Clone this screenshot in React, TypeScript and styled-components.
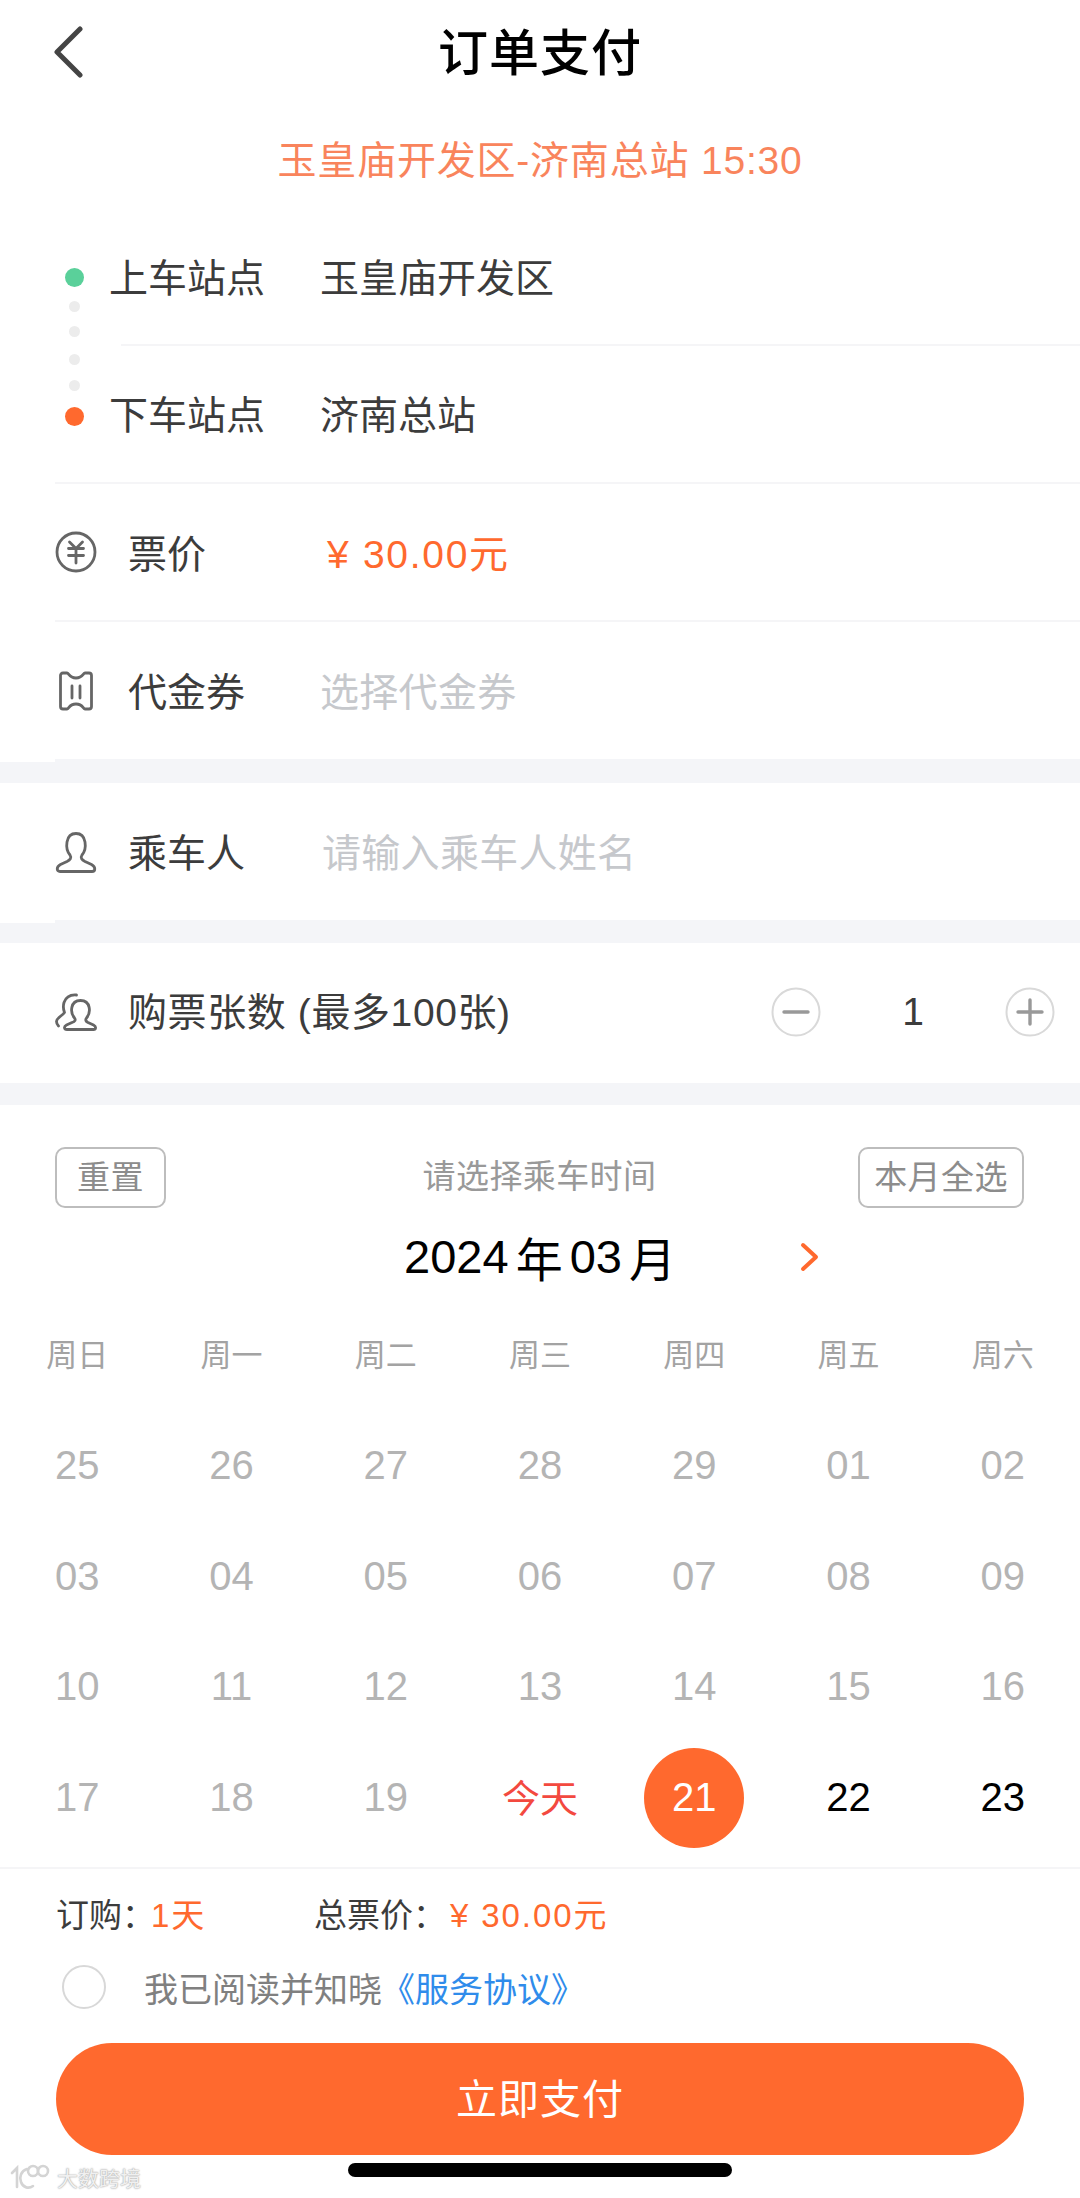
import React, { FC } from 'react'
import styled, { createGlobalStyle } from 'styled-components'

const GlobalStyle = createGlobalStyle`
    html, body {
        margin: 0;
        padding: 0;
        background: #fff;
    }
    * {
        box-sizing: border-box;
    }
    body {
        font-family: "Liberation Sans", "Noto Sans CJK SC", sans-serif;
    }
`

const ORANGE = '#ff692e'
const LINE = '#f5f5f7'
const BAND = '#f4f5f8'

const Page = styled.div`
    position: relative;
    width: 1080px;
    height: 2198px;
    overflow: hidden;
    background: #fff;
`
const Header = styled.header`
    position: relative;
    height: 104px;
    padding-bottom: 6px;
    display: flex;
    align-items: center;
    justify-content: center;
`
const BackButton = styled.svg`
    position: absolute;
    left: 52px;
    top: 26px;
    width: 32px;
    height: 52px;
`
const Title = styled.h1`
    margin: 0;
    font-size: 50px;
    font-weight: 500;
    letter-spacing: 1px;
    color: #000;
`
const Route = styled.div`
    height: 108px;
    padding-bottom: 2px;
    display: flex;
    align-items: center;
    justify-content: center;
    font-size: 39px;
    letter-spacing: 0.8px;
    color: #f9845c;
`
const Stations = styled.section`
    display: flex;
    margin-left: 55px;
    height: 272px;
    border-bottom: 2px solid ${LINE};
`
const Rail = styled.div`
    width: 38px;
    flex: none;
    margin-right: 16px;
    display: flex;
    flex-direction: column;
    align-items: center;
`
const RailDot = styled.i<{ $size: number; $top: number; $color: string }>`
    display: block;
    width: ${(p) => p.$size}px;
    height: ${(p) => p.$size}px;
    margin-top: ${(p) => p.$top}px;
    border-radius: 50%;
    background: ${(p) => p.$color};
`
const StationRows = styled.div`
    flex: 1;
`
const StationRow = styled.div<{ $height: number; $lift: number }>`
    position: relative;
    height: ${(p) => p.$height}px;
    padding-bottom: ${(p) => p.$lift}px;
    display: flex;
    align-items: center;
    font-size: 39px;
    color: #3c3c3c;
`
const StationDivider = styled.div`
    height: 2px;
    margin-left: 12px;
    background: ${LINE};
`
const StationLabel = styled.span`
    width: 211px;
`
const Row = styled.div<{ $height: number; $line?: string; $size?: number }>`
    display: flex;
    align-items: center;
    height: ${(p) => p.$height}px;
    margin-left: 55px;
    border-bottom: ${(p) => p.$size ?? 2}px solid ${(p) => p.$line ?? LINE};
    font-size: 39px;
    color: #3c3c3c;
`
const RowIcon = styled.svg`
    width: 42px;
    height: 42px;
    flex: none;
    fill: none;
    stroke: #666;
    stroke-width: 2.8;
    stroke-linejoin: round;
    stroke-linecap: round;
`
const RowLabel = styled.span<{ $width?: number; $spacing?: number; $lift?: number }>`
    margin-left: 31px;
    padding-bottom: ${(p) => p.$lift ?? 2}px;
    width: ${(p) => p.$width ?? 192}px;
    flex: none;
    white-space: nowrap;
    letter-spacing: ${(p) => p.$spacing ?? 0}px;
`
const Price = styled.span`
    padding-left: 7px;
    padding-bottom: 2px;
    letter-spacing: 1.7px;
    color: ${ORANGE};
`
const Placeholder = styled.span<{ $shift?: number }>`
    margin-left: ${(p) => p.$shift ?? 0}px;
    padding-bottom: 4px;
    letter-spacing: 0.3px;
    color: #c6c8cc;
`
const Band = styled.div<{ $height: number }>`
    height: ${(p) => p.$height}px;
    background: ${BAND};
`
const Stepper = styled.div`
    margin-left: auto;
    width: 284px;
    margin-right: 25px;
    display: flex;
    align-items: center;
    justify-content: space-between;
`
const StepButton = styled.svg`
    width: 50px;
    height: 50px;
    fill: none;
    stroke: #999;
    stroke-width: 3.4;
    stroke-linecap: round;
`
const Calendar = styled.section`
    padding-top: 42px;
`
const CalendarTop = styled.div`
    display: grid;
    grid-template-columns: 1fr auto 1fr;
    align-items: center;
    height: 61px;
    padding: 0 56px 0 55px;
`
const OutlineButton = styled.div<{ $width: number; $end?: boolean }>`
    width: ${(p) => p.$width}px;
    height: 61px;
    justify-self: ${(p) => (p.$end ? 'end' : 'start')};
    padding-bottom: 6px;
    display: flex;
    align-items: center;
    justify-content: center;
    border: 2px solid #bdbdbd;
    border-radius: 10px;
    font-size: 33px;
    letter-spacing: 0.4px;
    color: #8c8c8c;
`
const CalendarHint = styled.span`
    padding-bottom: 7px;
    font-size: 33px;
    letter-spacing: 0.4px;
    color: #999;
`
const MonthRow = styled.div`
    position: relative;
    height: 60px;
    margin-top: 20px;
    padding-bottom: 4px;
    display: flex;
    align-items: center;
    justify-content: center;
    gap: 7px;
    font-size: 47px;
    color: #000;
`
const NextMonth = styled.svg`
    position: absolute;
    left: 799px;
    top: 14px;
    width: 22px;
    height: 30px;
    fill: none;
    stroke: ${ORANGE};
    stroke-width: 4;
    stroke-linecap: round;
    stroke-linejoin: round;
`
const WeekRow = styled.div`
    display: grid;
    grid-template-columns: repeat(7, 1fr);
    height: 50px;
    margin-top: 42px;
    padding-bottom: 7px;
    align-items: center;
    justify-items: center;
    font-size: 31px;
    color: #a3a3a3;
`
const DayGrid = styled.div`
    display: grid;
    grid-template-columns: repeat(7, 1fr);
    grid-auto-rows: 110.5px;
    margin-top: 31px;
    align-items: center;
    justify-items: center;
`
const Day = styled.div<{ $tone: string }>`
    width: 100px;
    height: 100px;
    padding-bottom: ${(p) => (p.$tone === 'today' ? 5 : 1)}px;
    display: flex;
    align-items: center;
    justify-content: center;
    border-radius: 50%;
    font-size: ${(p) => (p.$tone === 'today' ? 38 : 40)}px;
    background: ${(p) => (p.$tone === 'selected' ? ORANGE : 'transparent')};
    color: ${(p) =>
        p.$tone === 'selected' ? '#fff' : p.$tone === 'today' ? '#f3493f' : p.$tone === 'open' ? '#000' : '#b4b4b4'};
`
const Footer = styled.footer`
    margin-top: 14px;
    border-top: 2px solid ${LINE};
    padding: 24px 56px 0 56px;
`
const Summary = styled.div`
    height: 40px;
    display: flex;
    align-items: center;
    font-size: 33px;
    color: #3c3c3c;
`
const SummaryItem = styled.span<{ $width?: number }>`
    width: ${(p) => (p.$width ? `${p.$width}px` : 'auto')};
    white-space: nowrap;
`
const Accent = styled.span<{ $shift: number }>`
    margin-left: ${(p) => p.$shift}px;
    letter-spacing: 1.9px;
    color: ${ORANGE};
`
const Agreement = styled.div`
    height: 48px;
    margin-top: 30px;
    padding-left: 6px;
    display: flex;
    align-items: center;
    font-size: 34px;
    color: #808080;
`
const Check = styled.i`
    width: 44px;
    height: 44px;
    margin-right: 38px;
    border-radius: 50%;
    border: 2px solid #d8d8d8;
`
const AgreementLink = styled.span`
    margin-left: -1px;
    color: #2f8ceb;
`
const PayButton = styled.div`
    height: 112px;
    margin-top: 32px;
    padding-bottom: 6px;
    display: flex;
    align-items: center;
    justify-content: center;
    border-radius: 56px;
    background: ${ORANGE};
    font-size: 41px;
    letter-spacing: 1px;
    color: #fff;
`
const HomeIndicator = styled.div`
    position: absolute;
    left: 348px;
    bottom: 21px;
    width: 384px;
    height: 14px;
    border-radius: 7px;
    background: #000;
`
const Watermark = styled.div`
    position: absolute;
    left: 10px;
    bottom: 6px;
    display: flex;
    align-items: center;
    gap: 7px;
    font-size: 21px;
    color: #f0f0f0;
    text-shadow: 0 0 2px #aaa, 0 0 1px #aaa;
`
const WatermarkLogo = styled.svg`
    width: 40px;
    height: 26px;
    fill: none;
    stroke: #d4d4d4;
    stroke-width: 2.6;
    stroke-linecap: round;
`

const days: [string, string][] = [
    ['25', 'past'], ['26', 'past'], ['27', 'past'], ['28', 'past'], ['29', 'past'], ['01', 'past'], ['02', 'past'],
    ['03', 'past'], ['04', 'past'], ['05', 'past'], ['06', 'past'], ['07', 'past'], ['08', 'past'], ['09', 'past'],
    ['10', 'past'], ['11', 'past'], ['12', 'past'], ['13', 'past'], ['14', 'past'], ['15', 'past'], ['16', 'past'],
    ['17', 'past'], ['18', 'past'], ['19', 'past'], ['今天', 'today'], ['21', 'selected'], ['22', 'open'], ['23', 'open'],
]
const weeks = ['周日', '周一', '周二', '周三', '周四', '周五', '周六']

const App: FC = () => {
    return (
        <Page>
            <GlobalStyle />
            <Header>
                <BackButton viewBox="0 0 32 52" fill="none" stroke="#444" strokeWidth="5" strokeLinecap="round" strokeLinejoin="round">
                    <path d="M28 3L5 26L28 49" />
                </BackButton>
                <Title>订单支付</Title>
            </Header>
            <Route>玉皇庙开发区-济南总站 15:30</Route>
            <Stations>
                <Rail>
                    <RailDot $size={19} $top={56} $color="#5ad09a" />
                    <RailDot $size={11} $top={14} $color="#ececec" />
                    <RailDot $size={11} $top={14} $color="#ececec" />
                    <RailDot $size={11} $top={17} $color="#ececec" />
                    <RailDot $size={11} $top={15} $color="#ececec" />
                    <RailDot $size={19} $top={16} $color={ORANGE} />
                </Rail>
                <StationRows>
                    <StationRow $height={132} $lift={6}>
                        <StationLabel>上车站点</StationLabel>
                        玉皇庙开发区
                    </StationRow>
                    <StationDivider />
                    <StationRow $height={136} $lift={4}>
                        <StationLabel>下车站点</StationLabel>
                        济南总站
                    </StationRow>
                </StationRows>
            </Stations>
            <Row $height={138}>
                <RowIcon viewBox="0 0 42 42">
                    <circle cx="21" cy="21" r="19" />
                    <path d="M14.500 11L21 17.500L27.500 11M13.500 17.500H28.500M13.500 24.500H28.500M21 17.500V32" />
                </RowIcon>
                <RowLabel>票价</RowLabel>
                <Price>¥ 30.00元</Price>
            </Row>
            <Row $height={140} $line={BAND} $size={3}>
                <RowIcon viewBox="0 0 42 42">
                    <path d="M8 3H12C14 3 14 8 21 8C28 8 28 3 30 3H34C35.500 3 36.500 4 36.500 5.500V36.500C36.500 38 35.500 39 34 39H30C28 39 28 34 21 34C14 34 14 39 12 39H8C6.500 39 5.500 38 5.500 36.500V5.500C5.500 4 6.500 3 8 3Z" />
                    <path d="M17 16V28M25 16V28" />
                </RowIcon>
                <RowLabel $lift={4}>代金券</RowLabel>
                <Placeholder>选择代金券</Placeholder>
            </Row>
            <Band $height={21} />
            <Row $height={140} $line={BAND} $size={3}>
                <RowIcon viewBox="0 0 42 42">
                    <path d="M15 24C10 18 10 2.500 21 2.500C32 2.500 32 18 27 24C25 27 27 29 30 30.500L36.500 33.500C41 36 40.500 40.500 37 40.500H5C1.500 40.500 1 36 5.500 33.500L12 30.500C15 29 17 27 15 24Z" />
                </RowIcon>
                <RowLabel $lift={4}>乘车人</RowLabel>
                <Placeholder $shift={2}>请输入乘车人姓名</Placeholder>
            </Row>
            <Band $height={20} />
            <Row $height={140} $line="#fff">
                <RowIcon viewBox="0 0 42 42">
                    <path d="M21.500 4C16 3.500 11 6 9 11.500C8 15 8.500 19 9.500 21.500C7 25 2 26.500 1.500 30.500C1.500 32.500 2.500 34 3.500 35" />
                    <path d="M19.500 27C15 22 15 9.500 25.500 9.500C36 9.500 36 22 31.500 27C30 29 31 30.500 33 31.500L38.500 34C41.500 35.500 41 38.500 38.500 38.500H12C9 38.500 8.500 35.500 11.500 34L17 31.500C20 30.500 21 29 19.500 27Z" />
                </RowIcon>
                <RowLabel $width={500} $spacing={0.6} $lift={6}>购票张数 (最多100张)</RowLabel>
                <Stepper>
                    <StepButton viewBox="0 0 50 50">
                        <circle cx="25" cy="25" r="23.500" stroke="#d9d9d9" strokeWidth="2" />
                        <path d="M13 25H37" />
                    </StepButton>
                    <span>1</span>
                    <StepButton viewBox="0 0 50 50">
                        <circle cx="25" cy="25" r="23.500" stroke="#d9d9d9" strokeWidth="2" />
                        <path d="M13 25H37M25 13V37" />
                    </StepButton>
                </Stepper>
            </Row>
            <Band $height={22} />
            <Calendar>
                <CalendarTop>
                    <OutlineButton $width={111}>重置</OutlineButton>
                    <CalendarHint>请选择乘车时间</CalendarHint>
                    <OutlineButton $width={166} $end>本月全选</OutlineButton>
                </CalendarTop>
                <MonthRow>
                    <span>2024</span>
                    <span>年</span>
                    <span>03</span>
                    <span>月</span>
                    <NextMonth viewBox="0 0 22 30">
                        <path d="M4 3L17 15L4 27" />
                    </NextMonth>
                </MonthRow>
                <WeekRow>
                    {weeks.map((week) => (
                        <span key={week}>{week}</span>
                    ))}
                </WeekRow>
                <DayGrid>
                    {days.map(([label, tone]) => (
                        <Day key={label} $tone={tone}>
                            {label}
                        </Day>
                    ))}
                </DayGrid>
            </Calendar>
            <Footer>
                <Summary>
                    <SummaryItem $width={258}>
                        订购：<Accent $shift={-4}>1天</Accent>
                    </SummaryItem>
                    <SummaryItem>
                        总票价：<Accent $shift={4}>¥ 30.00元</Accent>
                    </SummaryItem>
                </Summary>
                <Agreement>
                    <Check />
                    我已阅读并知晓<AgreementLink>《服务协议》</AgreementLink>
                </Agreement>
                <PayButton>立即支付</PayButton>
            </Footer>
            <HomeIndicator />
            <Watermark>
                <WatermarkLogo viewBox="0 0 40 26">
                    <path d="M2 9L7 4V23M17 5C11 7 9 13 11 18C13 24 19 25 23 22" />
                    <circle cx="23" cy="7" r="5" />
                    <circle cx="33" cy="7" r="5" />
                </WatermarkLogo>
                大数跨境
            </Watermark>
        </Page>
    )
}

export default App
